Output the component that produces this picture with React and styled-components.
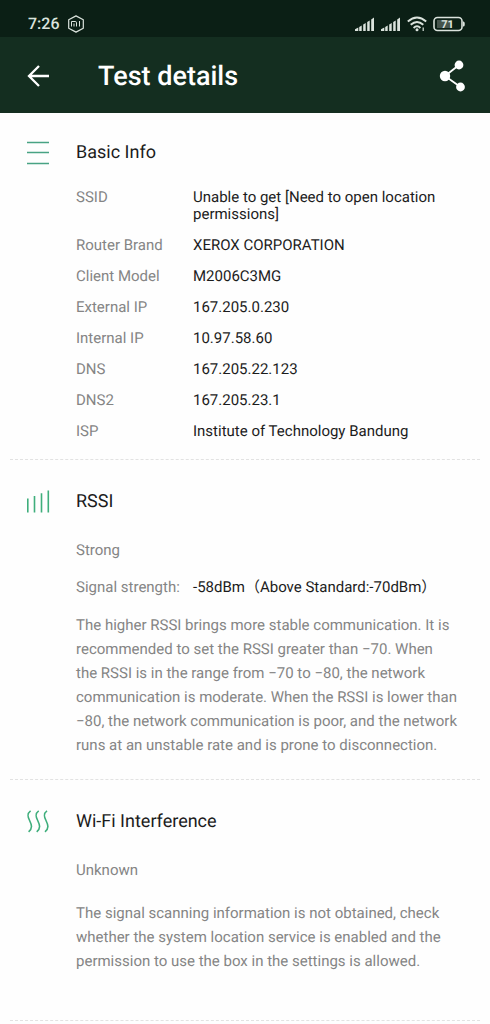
import styled, { createGlobalStyle } from "styled-components";

const GlobalStyle = createGlobalStyle`
* {
box-sizing: border-box;
}
body {
margin: 0;
background-color: #fefefe;
font-family: Roboto, "Noto Sans CJK SC", sans-serif;
font-size: 15px;
line-height: 17px;
color: #1c1c1c;
text-rendering: geometricPrecision;
}
`
const StatusBar = styled.div`
display: flex;
justify-content: space-between;
align-items: center;
height: 37px;
padding: 10px 25px 0 28px;
background-color: #0b1f15;
color: #dbe3dd;
`
const StatusGroup = styled.div`
display: flex;
align-items: center;
gap: ${({ $gap }) => $gap}px;
`
const Clock = styled.span`
font-size: 16px;
font-weight: 500;
`
const Header = styled.header`
display: flex;
align-items: center;
height: 76px;
padding: 2px 23px 0 26px;
background-color: #142e20;
color: #fff;
`
const IconButton = styled.button`
display: flex;
padding: 0;
border: none;
background: none;
color: inherit;
cursor: pointer;
`
const Title = styled.h1`
flex: 1;
margin: 0 0 0 48px;
font-size: 27px;
font-weight: 500;
line-height: 32px;
`
const SectionBox = styled.section`
display: grid;
grid-template-columns: 24px 1fr;
column-gap: 26px;
margin: 0 10px;
padding: ${({ $top }) => $top}px 18px ${({ $bottom }) => $bottom}px 16px;
border-bottom: 1px dashed #e2e2e2;
`
const SectionIcon = styled.div`
display: flex;
align-items: center;
height: 24px;
`
const SectionTitle = styled.h2`
margin: 0;
font-size: 18px;
font-weight: 400;
line-height: 24px;
`
const InfoList = styled.dl`
display: flex;
flex-direction: column;
gap: 14px;
margin: ${({ $top }) => $top}px 0 0;
`
const InfoRow = styled.div`
display: grid;
grid-template-columns: 117px 1fr;
`
const Label = styled.dt`
color: #858585;
`
const Value = styled.dd`
margin: 0;
`
const Status = styled.p`
margin: 28px 0 0;
color: #858585;
`
const Description = styled.p`
margin: ${({ $top }) => $top}px 0 0;
line-height: 24px;
color: #858585;
`

const info = [
    ["SSID", "Unable to get [Need to open location permissions]"],
    ["Router Brand", "XEROX CORPORATION"],
    ["Client Model", "M2006C3MG"],
    ["External IP", "167.205.0.230"],
    ["Internal IP", "10.97.58.60"],
    ["DNS", "167.205.22.123"],
    ["DNS2", "167.205.23.1"],
    ["ISP", "Institute of Technology Bandung"],
]

const MiIcon = () => (
    <svg width="18" height="18" viewBox="0 0 18 18" fill="none" stroke="currentColor" strokeWidth="1.2">
        <path d="M9 .9 16.3 4.8v8.4L9 17.1 1.700 13.2V4.800Z" strokeLinejoin="round" />
        <path d="M4.500 11.500V6.500h3.700q1.300 0 1.300 1.300v3.700M7 8.500v3M12.500 6v5.500" strokeWidth="1" />
    </svg>
)

const SignalIcon = () => (
    <svg width="20" height="14" viewBox="0 0 20 14" fill="currentColor">
        <path d="M0 14v-1.800l3.300-1.700V14ZM4.200 14v-4l2.500-1.500V14ZM8.200 14V7.500l2.500-1.500v8ZM12.200 14V5l2.500-1.500V14ZM16.200 14V2.500L19 .5V14Z" />
    </svg>
)

const WifiIcon = () => (
    <svg width="20" height="16" viewBox="0 0 20 16" fill="none" stroke="currentColor" strokeWidth="1.900">
        <path d="M.8 5.500Q10-2.500 19.200 5.500M3.700 8.800Q10 3 16.300 8.800M6.600 12Q10 8.700 13.400 12" />
        <circle cx="10" cy="13.800" r="1.500" fill="currentColor" stroke="none" />
        <path d="M16.200 11.500v3.500" strokeWidth="1.200" />
    </svg>
)

const BatteryIcon = () => (
    <svg width="32" height="16" viewBox="0 0 32 16">
        <rect x="1" y="1.500" width="28" height="13" rx="3.500" fill="none" stroke="currentColor" strokeWidth="1.600" />
        <path d="M4 4h14v8H4Z" fill="#46544c" />
        <path d="M30 5.500h.6q1.200 0 1.200 2.500t-1.200 2.500H30Z" fill="currentColor" />
        <text x="14.500" y="11.800" textAnchor="middle" fontSize="11" fontWeight="700" fill="currentColor">71</text>
    </svg>
)

const BackIcon = () => (
    <svg width="24" height="24" viewBox="0 0 24 24" fill="none" stroke="currentColor" strokeWidth="2.300">
        <path d="M13 2 3 12l10 10M3.500 12H23" />
    </svg>
)

const ShareIcon = () => (
    <svg width="28" height="32" viewBox="0 0 28 32" fill="currentColor" stroke="currentColor">
        <path d="M21.500 27 6 16 20 5" fill="none" strokeWidth="1.800" />
        <circle cx="6" cy="16" r="5.200" stroke="none" />
        <circle cx="20" cy="5" r="4.400" stroke="none" />
        <circle cx="21.500" cy="27" r="4.400" stroke="none" />
    </svg>
)

const ListIcon = () => (
    <svg width="24" height="24" viewBox="0 0 24 24" stroke="#48a384" strokeWidth="1.600">
        <path d="M1 1.500h22M1 11.500h22M1 22.500h22" />
    </svg>
)

const BarsIcon = () => (
    <svg width="24" height="24" viewBox="0 0 24 24" stroke="#3fae7c" strokeWidth="1.600">
        <path d="M1.800 8.500v14M8.500 6v16.500M15.500 3.300v19.200M22.300 .5v22" />
    </svg>
)

const WavesIcon = () => (
    <svg width="24" height="24" viewBox="0 0 24 24" fill="none" stroke="#3fae7c" strokeWidth="1.600">
        <path d="M4.600 .8C.8 3.500 1.500 6.500 3.600 10.500c2.200 4.500 3.200 8-1 11.300M12.700 .8c-3.800 2.700-3.100 5.700-1 9.700 2.200 4.500 3.200 8-1 11.300M21 .8c-3.800 2.700-3.100 5.700-1 9.700 2.200 4.500 3.200 8-1 11.300" />
    </svg>
)

const Section = ({ icon, title, top = 30, bottom, children }) => {
    return (
    <SectionBox $top={top} $bottom={bottom}>
        <SectionIcon>{icon}</SectionIcon>
        <div>
            <SectionTitle>{title}</SectionTitle>
            {children}
        </div>
    </SectionBox>)
}

const App = () => {
    return (
    <>
        <GlobalStyle />
        <StatusBar>
            <StatusGroup $gap={7}><Clock>7:26</Clock><MiIcon /></StatusGroup>
            <StatusGroup $gap={6}><SignalIcon /><SignalIcon /><WifiIcon /><BatteryIcon /></StatusGroup>
        </StatusBar>
        <Header>
            <IconButton type="button" aria-label="Back"><BackIcon /></IconButton>
            <Title>Test details</Title>
            <IconButton type="button" aria-label="Share"><ShareIcon /></IconButton>
        </Header>
        <main>
            <Section icon={<ListIcon />} title="Basic Info" top={28} bottom={19}>
                <InfoList $top={24}>
                    {info.map(([label, value]) => (
                        <InfoRow key={label}><Label>{label}</Label><Value>{value}</Value></InfoRow>
                    ))}
                </InfoList>
            </Section>
            <Section icon={<BarsIcon />} title="RSSI" bottom={22}>
                <Status>Strong</Status>
                <InfoList $top={20}>
                    <InfoRow><Label>Signal strength:</Label><Value>-58dBm（Above Standard:-70dBm）</Value></InfoRow>
                </InfoList>
                <Description $top={17}>
                    The higher RSSI brings more stable communication. It is recommended to set the RSSI greater than −70. When
                    <br />
                    the RSSI is in the range from −70 to −80, the network communication is moderate. When the RSSI is lower than −80, the network communication is poor, and the network runs at an unstable rate and is prone to disconnection.
                </Description>
            </Section>
            <Section icon={<WavesIcon />} title="Wi-Fi Interference" bottom={47}>
                <Status>Unknown</Status>
                <Description $top={22}>
                    The signal scanning information is not obtained, check whether the system location service is enabled and the permission to use the box in the settings is allowed.
                </Description>
            </Section>
        </main>
    </>)
}
export default App;
